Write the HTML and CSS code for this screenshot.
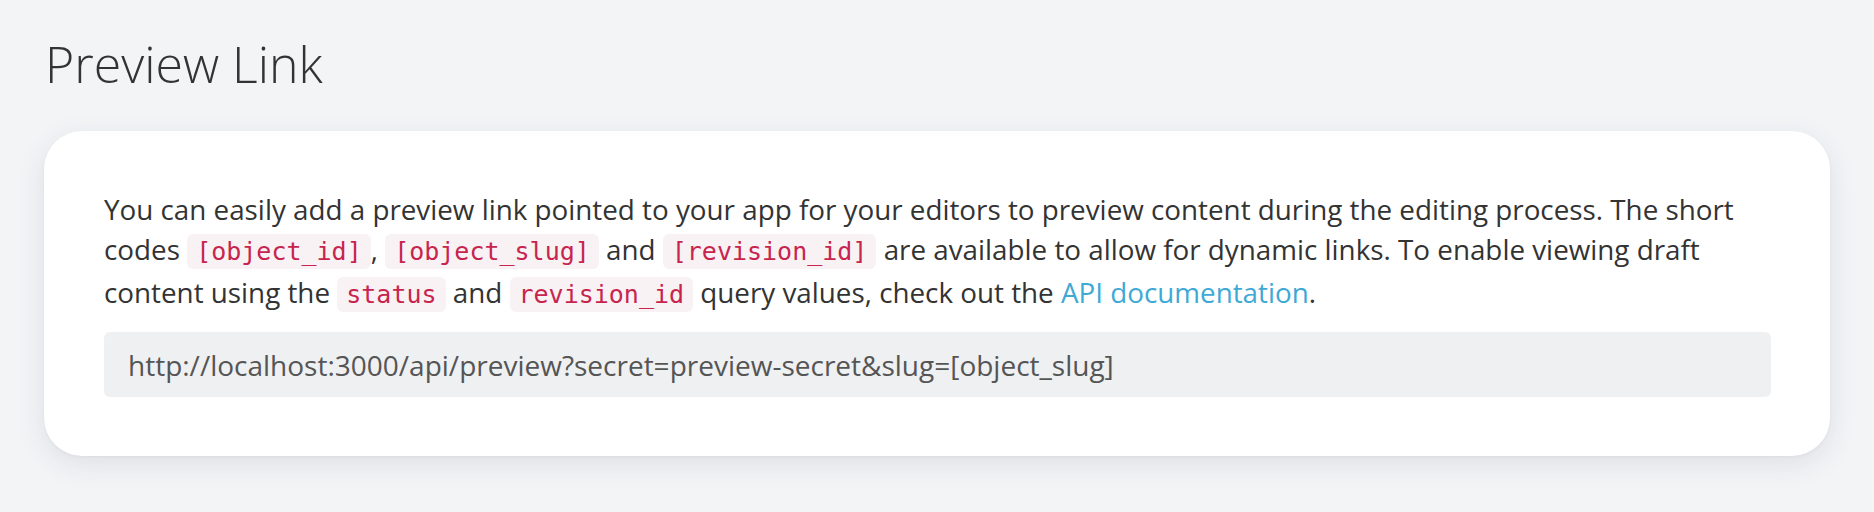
FILE: index.html
```html
<!DOCTYPE html>
<html lang="en">
<head>
<meta charset="utf-8">
<title>Preview Link</title>
<link rel="stylesheet" href="styles.css">
</head>
<body>
<main class="page">
  <h1 class="title">Preview Link</h1>
  <section class="card">
    <p class="desc">You can easily add a preview link pointed to your app for your editors to preview content during the editing process. The short codes <code>[object_id]</code>, <code>[object_slug]</code> and <code>[revision_id]</code> are available to allow for dynamic links. To enable viewing draft content using the <code>status</code> and <code>revision_id</code> query values, check out the <a href="#" class="link">API documentation</a>.</p>
    <div class="field">http://localhost:3000/api/preview?secret=preview-secret&amp;slug=[object_slug]</div>
  </section>
</main>
</body>
</html>
```
FILE: styles.css
```css
html, body {
  margin: 0;
  padding: 0;
  background: #f3f4f6;
}
body {
  font-family: "Open Sans", "Liberation Sans", sans-serif;
  color: #333;
  height: 512px;
  overflow: hidden;
}
.page {
  padding: 30px 44px 0 44px;
  width: 1786px;
}
.title {
  margin: 0 0 33px 1px;
  font-size: 50px;
  font-weight: 300;
  line-height: 68px;
  color: #333;
}
.card {
  background: #fff;
  border-radius: 38px;
  padding: 58px 59px 59px 60px;
  box-shadow: 0 8px 28px rgba(40, 50, 80, 0.10), 0 1px 3px rgba(40, 50, 80, 0.05);
}
.desc {
  margin: 0 0 17px 0;
  font-size: 27.8px;
  line-height: 40px;
  color: #333;
}
code {
  font-family: "DejaVu Sans Mono", "Liberation Mono", monospace;
  font-size: 25px;
  color: #c7254e;
  background: #f9f2f4;
  border-radius: 6px;
  padding: 3px 9px;
}
.link {
  color: #3fa9d5;
  text-decoration: none;
}
.field {
  height: 65px;
  display: flex;
  align-items: center;
  padding: 0 24px;
  background: #eff0f2;
  border-radius: 6px;
  font-size: 28px;
  color: #555;
}
```
